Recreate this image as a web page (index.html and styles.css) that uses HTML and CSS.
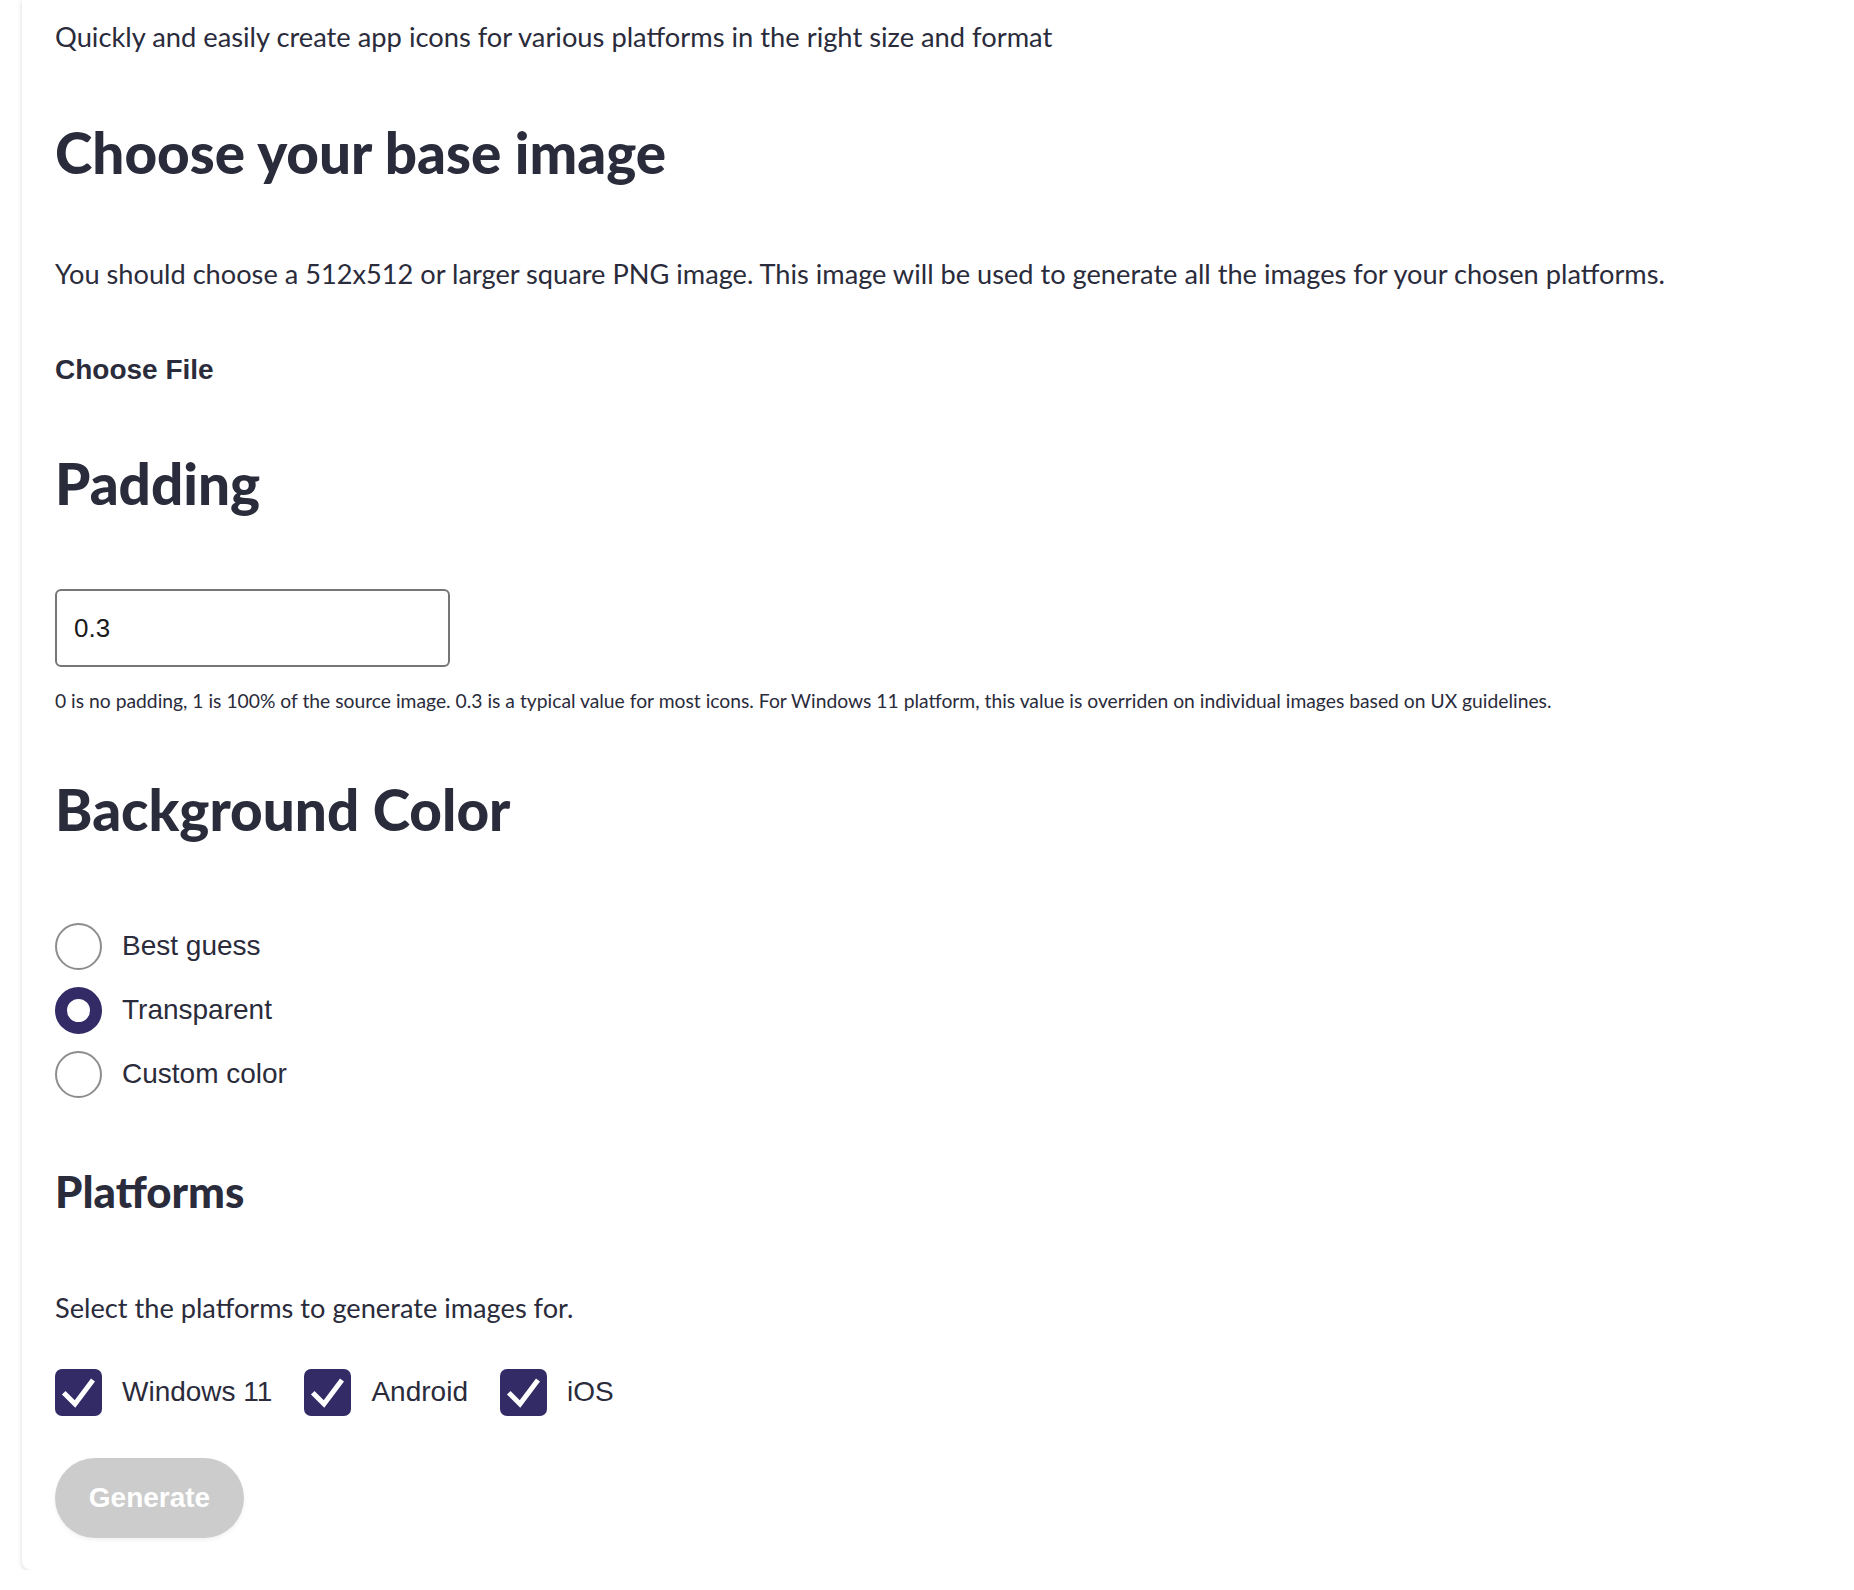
FILE: index.html
```html
<!DOCTYPE html>
<html lang="en">
<head>
<meta charset="utf-8">
<title>App Image Generator</title>
<link rel="stylesheet" href="styles.css">
</head>
<body>
<main class="card">
  <p class="subtitle">Quickly and easily create app icons for various platforms in the right size and format</p>

  <h1 class="heading heading-xl h-base">Choose your base image</h1>
  <p class="para p-base">You should choose a 512x512 or larger square PNG image. This image will be used to generate all the images for your chosen platforms.</p>
  <div class="file-btn">Choose File</div>

  <h2 class="heading heading-xl h-padding">Padding</h2>
  <div class="input-box">0.3</div>
  <p class="help">0 is no padding, 1 is 100% of the source image. 0.3 is a typical value for most icons. For Windows 11 platform, this value is overriden on individual images based on UX guidelines.</p>

  <h2 class="heading heading-xl h-bg">Background Color</h2>
  <div class="radios">
    <label class="radio-row"><span class="radio"></span><span class="ctl-label">Best guess</span></label>
    <label class="radio-row"><span class="radio checked"></span><span class="ctl-label">Transparent</span></label>
    <label class="radio-row"><span class="radio"></span><span class="ctl-label">Custom color</span></label>
  </div>

  <h3 class="heading heading-md">Platforms</h3>
  <p class="para p-select">Select the platforms to generate images for.</p>
  <div class="checks">
    <label class="check-row"><span class="box"><svg viewBox="0 0 47 47" width="47" height="47"><path d="M10.5 25.5 L20 35 L36.5 13" fill="none" stroke="#fff" stroke-width="5" stroke-linecap="square" stroke-linejoin="miter"/></svg></span><span class="ctl-label">Windows 11</span></label>
    <label class="check-row"><span class="box"><svg viewBox="0 0 47 47" width="47" height="47"><path d="M10.5 25.5 L20 35 L36.5 13" fill="none" stroke="#fff" stroke-width="5" stroke-linecap="square" stroke-linejoin="miter"/></svg></span><span class="ctl-label">Android</span></label>
    <label class="check-row"><span class="box"><svg viewBox="0 0 47 47" width="47" height="47"><path d="M10.5 25.5 L20 35 L36.5 13" fill="none" stroke="#fff" stroke-width="5" stroke-linecap="square" stroke-linejoin="miter"/></svg></span><span class="ctl-label">iOS</span></label>
  </div>

  <div class="gen-btn">Generate</div>
</main>
</body>
</html>
```

FILE: styles.css
```css
html, body {
  margin: 0;
  padding: 0;
  background: #ffffff;
  overflow: hidden;
}

body {
  font-family: "Lato", "Liberation Sans", sans-serif;
  color: #2a2b3b;
}

.card {
  display: flex;
  flex-direction: column;
  align-items: flex-start;
  margin-left: 22px;
  width: calc(100vw + 40px);
  box-sizing: border-box;
  padding: 19px 0 32px 33px;
  background: #ffffff;
  border-radius: 0 0 0 9px;
  box-shadow: 0 1px 5px rgba(0, 0, 0, 0.16);
}

.subtitle {
  margin: 0;
  font-size: 27.3px;
  line-height: 36px;
}

.heading {
  margin: 0;
  font-weight: 900;
  color: #2a2b3b;
}

.heading-xl {
  font-size: 56.6px;
  line-height: 64px;
}

.h-base { margin-top: 65px; }
.h-padding { margin-top: 65px; }
.h-bg { margin-top: 64px; }

.heading-md {
  font-size: 43.8px;
  line-height: 48px;
  margin-top: 61px;
}

.para {
  margin: 0;
  font-size: 27.2px;
  line-height: 36px;
}

.p-base { margin-top: 72px; }
.p-select { margin-top: 75px; }

.file-btn {
  margin-top: 62px;
  font-family: "Liberation Sans", Arial, sans-serif;
  font-weight: 700;
  font-size: 28px;
  line-height: 32px;
}

.input-box {
  margin-top: 74px;
  width: 395px;
  height: 78px;
  box-sizing: border-box;
  border: 2px solid #767676;
  border-radius: 6px;
  padding: 0 17px;
  display: flex;
  align-items: center;
  font-family: "Liberation Sans", Arial, sans-serif;
  font-size: 26px;
  color: #1a1a1a;
}

.help {
  margin: 22px 0 0;
  font-size: 19.3px;
  line-height: 24px;
}

.radios {
  margin-top: 73px;
  display: flex;
  flex-direction: column;
}

.radio-row {
  display: flex;
  align-items: center;
  gap: 20px;
  height: 64px;
}

.radio {
  width: 47px;
  height: 47px;
  box-sizing: border-box;
  border-radius: 50%;
  border: 2px solid #8d8d8d;
  background: #fff;
}

.radio.checked {
  border: 12px solid #322b66;
}

.ctl-label {
  font-family: "Liberation Sans", Arial, sans-serif;
  font-size: 28px;
  color: #2a2b3b;
}

.checks {
  margin-top: 42px;
  display: flex;
  align-items: center;
  gap: 32px;
  height: 48px;
}

.check-row {
  display: flex;
  align-items: center;
  gap: 20px;
}

.box {
  width: 47px;
  height: 47px;
  border-radius: 7px;
  background: #322b66;
  display: flex;
}

.gen-btn {
  margin-top: 42px;
  width: 189px;
  height: 80px;
  border-radius: 40px;
  background: #cccccc;
  color: #ffffff;
  font-family: "Liberation Sans", Arial, sans-serif;
  font-weight: 700;
  font-size: 28px;
  display: flex;
  align-items: center;
  justify-content: center;
  box-shadow: 0 2px 4px rgba(0, 0, 0, 0.06);
}
```
